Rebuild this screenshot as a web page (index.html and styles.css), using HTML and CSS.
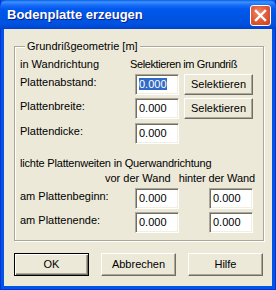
FILE: index.html
```html
<html>
	<head>
		<title>Bodenplatte erzeugen</title>
		<meta name="viewport" content="width=device-width, initial-scale=1">
		<link rel="stylesheet" href="styles.css">
	</head>
	<body>

		<div class="window">
			<div class="titleBar">
				<span class="title">Bodenplatte erzeugen</span>
				<div class="close">
					<svg width="19" height="19" viewBox="0 0 19 19">
						<path d="M5 5 L14 14 M14 5 L5 14" stroke="white" stroke-width="2.4" stroke-linecap="square"/>
					</svg>
				</div>
			</div>

			<div class="client">
				<fieldset class="group">
					<legend>Grundrißgeometrie [m]</legend>

					<div class="row head">
						<span class="label">in Wandrichtung</span>
						<span class="tight">Selektieren im Grundriß</span>
					</div>

					<div class="row first">
						<span class="label">Plattenabstand:</span>
						<div class="edit"><span class="selected">0.000</span></div>
						<div class="button pick">Selektieren</div>
					</div>

					<div class="row">
						<span class="label">Plattenbreite:</span>
						<div class="edit">0.000</div>
						<div class="button pick">Selektieren</div>
					</div>

					<div class="row third">
						<span class="label">Plattendicke:</span>
						<div class="edit">0.000</div>
					</div>

					<div class="note">lichte Plattenweiten in Querwandrichtung</div>

					<div class="row cols">
						<span class="before">vor der Wand</span>
						<span class="behind">hinter der Wand</span>
					</div>

					<div class="row lower">
						<span class="label">am Plattenbeginn:</span>
						<div class="edit">0.000</div>
						<div class="edit far">0.000</div>
					</div>

					<div class="row lower">
						<span class="label">am Plattenende:</span>
						<div class="edit">0.000</div>
						<div class="edit far">0.000</div>
					</div>
				</fieldset>

				<div class="buttonBar">
					<div class="button default">OK</div>
					<div class="button">Abbrechen</div>
					<div class="button">Hilfe</div>
				</div>
			</div>
		</div>

	</body>
</html>
```

FILE: styles.css
```css
body
{
	margin: 0;
	font-family: "Liberation Sans", Arial, sans-serif;
	font-size: 11px;
	line-height: 13px;
	color: black;
}

.window
{
	width: 276px;
	height: 290px;
	box-sizing: border-box;
	display: flex;
	flex-direction: column;
	background-color: #0055e5;
	border: 1px solid #0831d9;
	border-top: none;
}

.titleBar
{
	height: 29px;
	margin: 0 -1px;
	display: flex;
	align-items: flex-start;
	border-radius: 7px 7px 0 0;
	background: linear-gradient(to bottom, #0a5ee8 0px, #3d93ff 2px, #1a6ef7 5px, #0058ee 9px, #0054e3 18px, #0052e0 24px, #0046d4 28px, #003dc8 29px);
}

.title
{
	margin: 7px 0 0 7px;
	font-weight: bold;
	font-size: 13px;
	line-height: 16px;
	color: white;
	text-shadow: 1px 1px 0 #0a1e8c;
}

.close
{
	margin: 5px 5px 0 auto;
	width: 19px;
	height: 19px;
	border: 1px solid white;
	border-radius: 3px;
	background: radial-gradient(circle at 40% 35%, #f08a6c 0%, #e35d3b 45%, #c7401c 100%);
}

.close svg
{
	display: block;
}

.client
{
	flex: 1;
	margin: 0 3px 3px 3px;
	padding: 0 8px 0 10px;
	background-color: #ece9d8;
}

.group
{
	margin: 11px 0 0 0;
	padding: 5px 0 0 5px;
	height: 201px;
	box-sizing: border-box;
	border: 1px solid #aca899;
	box-shadow: inset 1px 1px 0 white, 1px 1px 0 white;
}

.group legend
{
	margin-left: 5px;
	padding: 0 2px;
	background-color: #ece9d8;
}

.row
{
	display: flex;
	align-items: flex-start;
}

.label
{
	width: 115px;
	padding-top: 2px;
	white-space: nowrap;
}

.head .label
{
	width: 110px;
	padding-top: 0;
}

.tight
{
	letter-spacing: -0.4px;
}

.first
{
	margin-top: 2px;
}

.row + .row
{
	margin-top: 3px;
}

.row.third
{
	margin-top: 4px;
}

.note
{
	margin-top: 13px;
	letter-spacing: -0.2px;
}

.row.cols
{
	margin-top: 2px;
}

.before
{
	margin-left: 85px;
}

.behind
{
	margin-left: 8px;
	letter-spacing: -0.1px;
}

.row.lower
{
	margin-top: 3px;
}

.edit
{
	width: 44px;
	height: 21px;
	box-sizing: border-box;
	padding: 3px 0 0 3px;
	border: 1px solid;
	border-color: #aca899 white white #aca899;
	box-shadow: inset 1px 1px 0 #716f64, inset -1px -1px 0 #f1efe2;
	background-color: white;
}

.edit.far
{
	margin-left: 30px;
}

.selected
{
	background-color: #316ac5;
	color: white;
}

.button
{
	width: 75px;
	height: 23px;
	box-sizing: border-box;
	display: flex;
	align-items: center;
	justify-content: center;
	border: 1px solid;
	border-color: white #716f64 #716f64 white;
	box-shadow: inset -1px -1px 0 #aca899;
	background-color: #ece9d8;
}

.button.pick
{
	width: 69px;
	height: 21px;
	margin-left: 5px;
}

.button.default
{
	border: 1px solid black;
	box-shadow: inset 1px 1px 0 white, inset -1px -1px 0 #716f64, inset -2px -2px 0 #aca899;
}

.buttonBar
{
	margin-top: 12px;
	display: flex;
	gap: 12px;
}
```
